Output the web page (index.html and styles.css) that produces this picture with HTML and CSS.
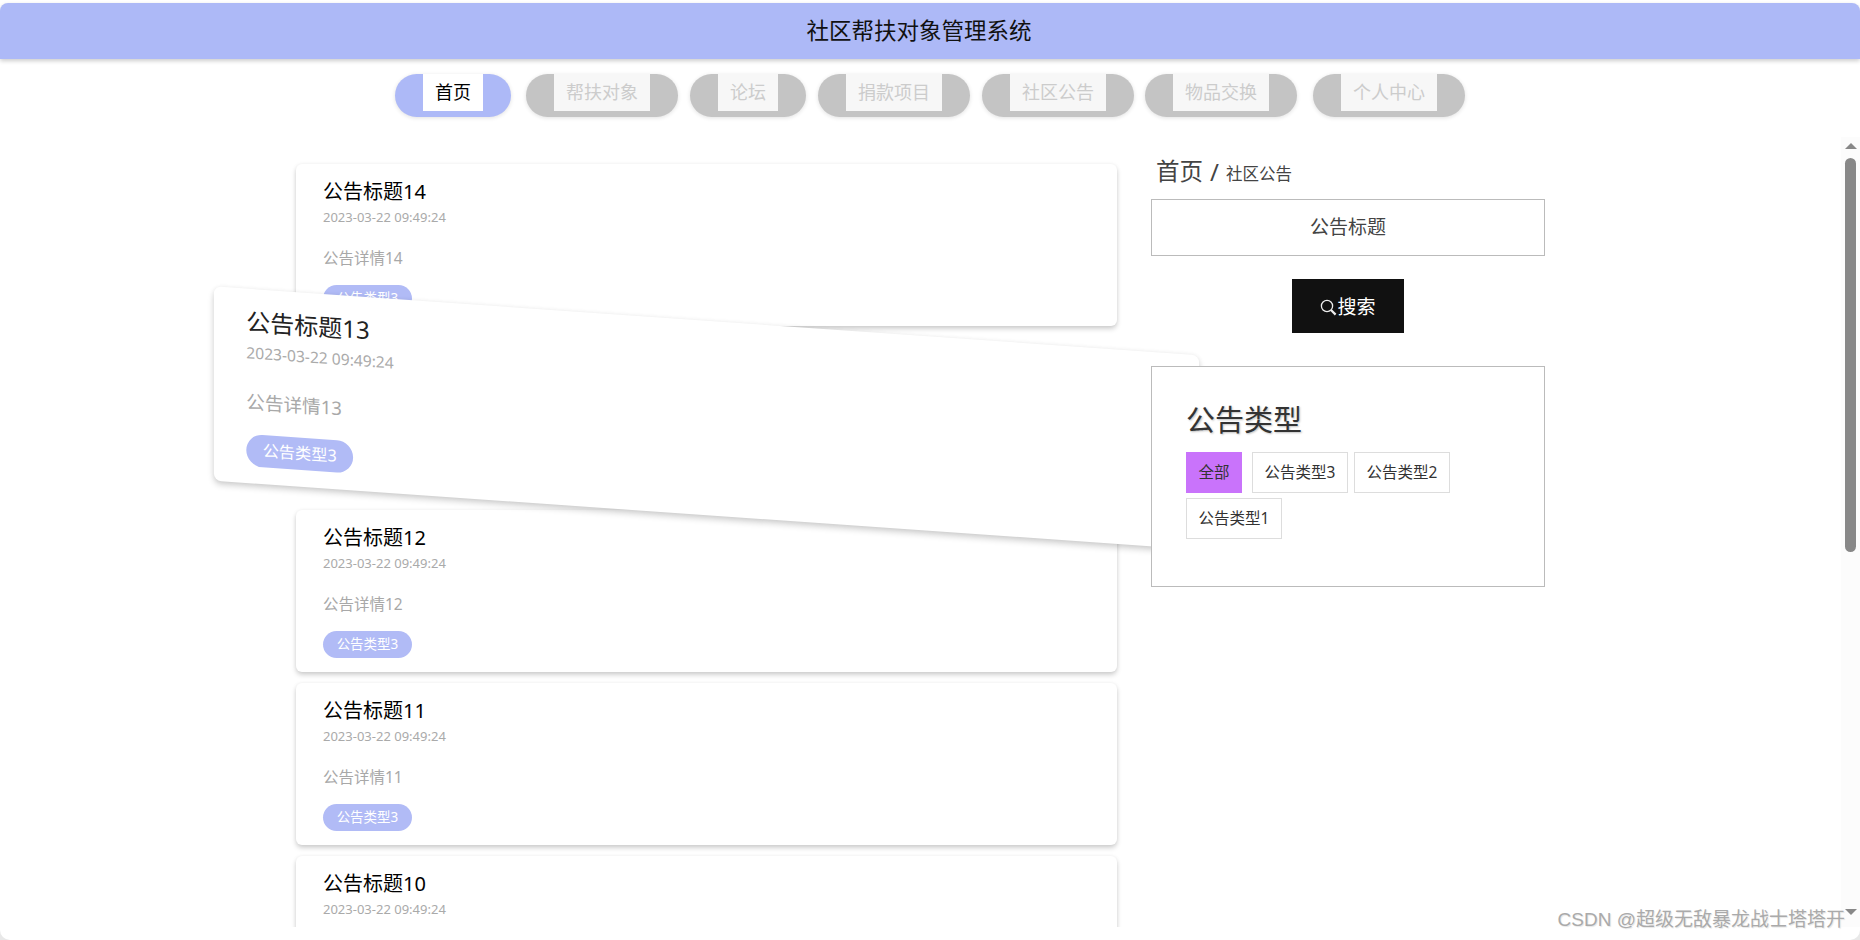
FILE: index.html
```html
<!DOCTYPE html>
<html lang="zh-CN">
<head>
  <meta charset="UTF-8" />
  <title>社区帮扶对象管理系统</title>
  <link rel="stylesheet" href="styles.css">
</head>
<body>
  <div class="app">
    <header class="top-bar">社区帮扶对象管理系统</header>

    <nav class="nav">
      <a class="nav-item active"><span>首页</span></a>
      <a class="nav-item"><span>帮扶对象</span></a>
      <a class="nav-item"><span>论坛</span></a>
      <a class="nav-item"><span>捐款项目</span></a>
      <a class="nav-item"><span>社区公告</span></a>
      <a class="nav-item swap"><span>物品交换</span></a>
      <a class="nav-item last"><span>个人中心</span></a>
    </nav>

    <main class="main">
      <div class="content">
        <section class="list">
          <article class="card">
            <h3 class="card-title">公告标题14</h3>
            <p class="card-date">2023-03-22 09:49:24</p>
            <p class="card-detail">公告详情14</p>
            <span class="card-tag">公告类型3</span>
          </article>
          <article class="card hovered">
            <h3 class="card-title">公告标题13</h3>
            <p class="card-date">2023-03-22 09:49:24</p>
            <p class="card-detail">公告详情13</p>
            <span class="card-tag">公告类型3</span>
          </article>
          <article class="card">
            <h3 class="card-title">公告标题12</h3>
            <p class="card-date">2023-03-22 09:49:24</p>
            <p class="card-detail">公告详情12</p>
            <span class="card-tag">公告类型3</span>
          </article>
          <article class="card">
            <h3 class="card-title">公告标题11</h3>
            <p class="card-date">2023-03-22 09:49:24</p>
            <p class="card-detail">公告详情11</p>
            <span class="card-tag">公告类型3</span>
          </article>
          <article class="card">
            <h3 class="card-title">公告标题10</h3>
            <p class="card-date">2023-03-22 09:49:24</p>
          </article>
        </section>

        <aside class="side">
          <div class="crumb"><span class="crumb-home">首页</span><span class="crumb-sep">/</span><span class="crumb-page">社区公告</span></div>
          <div class="search-input">公告标题</div>
          <button class="search-btn">
            <svg class="search-icon" viewBox="0 0 17 17" width="17" height="17">
              <circle cx="7" cy="7" r="5.6" fill="none" stroke="#eee" stroke-width="1.3" />
              <path d="M11 11 L15.6 15.6" stroke="#eee" stroke-width="2.2" />
            </svg>搜索
          </button>
          <div class="type-box">
            <h2 class="type-title">公告类型</h2>
            <div class="type-list">
              <span class="type-item current">全部</span>
              <span class="type-item">公告类型3</span>
              <span class="type-item">公告类型2</span>
              <span class="type-item">公告类型1</span>
            </div>
          </div>
        </aside>
      </div>

      <div class="scrollbar">
        <i class="arrow-up"></i>
        <div class="thumb"></div>
        <i class="arrow-down"></i>
      </div>
    </main>

    <div class="watermark">CSDN @超级无敌暴龙战士塔塔开</div>
  </div>
</body>
</html>
```

FILE: styles.css
```css
* { box-sizing: border-box; }
html, body { margin: 0; height: 100%; overflow: hidden; }
body { background: #e8e8e8; font-family: "Noto Sans", "Noto Sans CJK SC", sans-serif; color: #333; }
.app { position: relative; height: 940px; padding-top: 3px; background: #fff; border-radius: 0 0 10px 10px; overflow: hidden; }

.top-bar { height: 56px; line-height: 55px; padding-right: 22px; text-align: center; font-size: 22.5px; color: #111; background: #adb9f7; border-radius: 8px 8px 0 0; box-shadow: 0 2px 4px rgba(0,0,0,0.2); position: relative; z-index: 2; }

.nav { display: flex; justify-content: flex-start; gap: 12px; height: 78px; padding: 15px 0 0 395px; }
.nav-item { display: block; height: 43px; padding: 0 28px 6px; border-radius: 22px; background: #c4c4c4; box-shadow: 0 1px 4px rgba(0,0,0,0.12); }
.nav-item span { display: block; height: 37px; line-height: 36px; padding: 0 12px; font-size: 18px; color: #ccc; background: #f7f7f7; }
.nav-item.active { margin-right: 3px; background: #adb9f7; }
.nav-item.active span { color: #000; background: #fff; }
.nav-item.swap { margin-left: -1px; }
.nav-item.last { margin-left: 4px; }

.main { display: flex; height: 790px; }
.content { flex: 1; display: flex; overflow: hidden; padding: 27px 0 0 296px; }

.list { width: 821px; flex: none; }
.card { height: 162px; margin-bottom: 11px; padding: 14px 27px 0; background: #fff; border-radius: 6px; box-shadow: 0 3px 5px rgba(0,0,0,0.18), 0 0 4px rgba(0,0,0,0.05); }
.card-title { margin: 0; font-size: 20px; font-weight: 400; line-height: 28px; color: #000; }
.card-date { margin: 1px 0 0; font-size: 13px; line-height: 20px; color: #aaa; }
.card-detail { margin: 20px 0 0; font-size: 15.5px; line-height: 22px; color: #a8a8a8; }
.card-tag { display: block; width: 89px; height: 27px; margin-top: 16px; line-height: 26px; text-align: center; font-size: 13.5px; color: #fff; background: #b1bbf6; border-radius: 14px; }
.card.hovered { position: relative; z-index: 1; transform: scale(1.2) skewY(4deg); }
.card.hovered .card-title { color: #222; }

.side { position: relative; z-index: 2; width: 394px; margin-left: 34px; flex: none; }
.crumb { display: flex; align-items: flex-start; height: 45px; margin-top: -10px; padding-left: 5px; }
.crumb-home { font-size: 23.5px; line-height: 35px; color: #444; }
.crumb-sep { margin: 0 7px; font-size: 24px; line-height: 35px; color: #444; }
.crumb-page { font-size: 16.5px; line-height: 40px; color: #444; }
.search-input { height: 57px; line-height: 55px; text-align: center; font-size: 19px; color: #444; background: #fff; border: 1px solid #bbb; }
.search-btn { display: flex; align-items: center; justify-content: center; width: 112px; height: 54px; margin: 23px auto 0; padding: 0; border: none; font-family: inherit; font-size: 19px; color: #fff; background: #111; }
.search-icon { flex: none; margin-top: 2px; }
.type-box { height: 221px; margin-top: 33px; padding: 32px 29px 0 34px; background: #fff; border: 1px solid #bbb; }
.type-title { margin: 0; font-size: 29px; font-weight: 400; line-height: 42px; color: #333; text-shadow: 1px 1px 2px rgba(0,0,0,0.25); }
.type-list { display: flex; flex-wrap: wrap; gap: 5px 6px; margin-top: 11px; }
.type-item { display: block; height: 41px; line-height: 39px; padding: 0 11.5px; font-size: 15.5px; color: #333; background: #fff; border: 1px solid #ddd; }
.type-item.current { margin-right: 4px; padding: 0 12.5px; border: none; line-height: 41px; background: #c973fb; }

.scrollbar { position: relative; width: 19px; flex: none; display: flex; flex-direction: column; align-items: flex-start; padding: 6px 0 0 4px; background: #fcfcfc; }
.arrow-up { width: 0; height: 0; border-left: 6px solid transparent; border-right: 6px solid transparent; border-bottom: 6px solid #888; }
.thumb { width: 11px; height: 394px; margin-top: 9px; background: #888; border-radius: 6px; }
.arrow-down { width: 0; height: 0; margin-top: 357px; border-left: 6px solid transparent; border-right: 6px solid transparent; border-top: 6px solid #888; }

.watermark { position: absolute; right: 15px; bottom: 5px; z-index: 3; font-family: "Liberation Sans", "Noto Sans CJK SC", sans-serif; font-size: 19px; line-height: 30px; color: #aaa; text-shadow: 1px 1px 1px rgba(0,0,0,0.1); }
```
